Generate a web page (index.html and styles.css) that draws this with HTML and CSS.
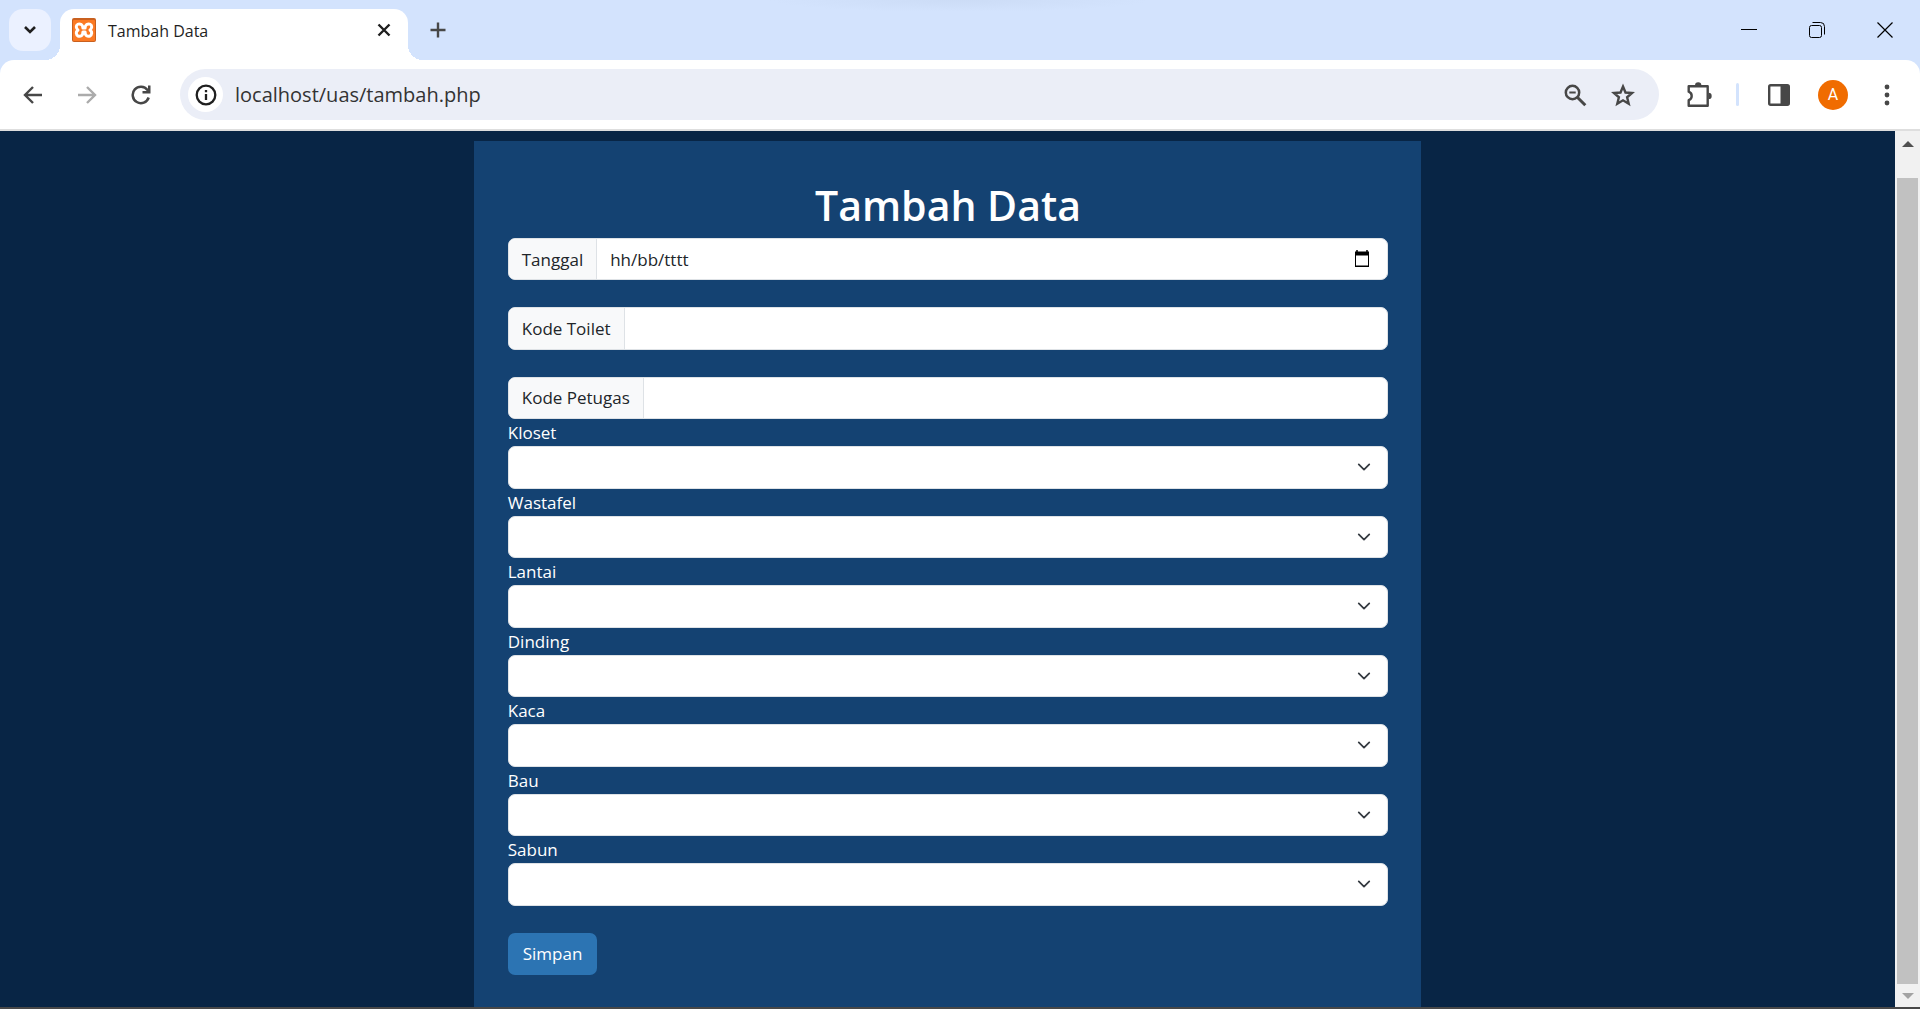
FILE: index.html
```html
<!DOCTYPE html>
<html lang="id">
<head>
<meta charset="utf-8">
<title>Tambah Data</title>
<link rel="stylesheet" href="styles.css">
</head>
<body>
<div class="window">
  <header class="tabstrip">
    <button class="tab-search" aria-label="Cari tab"><svg width="14" height="10" viewBox="0 0 14 10"><path d="M2 2l5 5 5-5" fill="none" stroke="#1f1f1f" stroke-width="2.6"/></svg></button>
    <div class="tab">
      <svg class="favicon" width="24" height="24" viewBox="0 0 24 24"><rect width="24" height="24" rx="2" fill="#c9601f"/><rect x="1" y="2" width="22" height="21" rx="1" fill="#fb7a24"/><path d="M9.300 6.600C6.800 5 4.100 6.400 4.300 9c.1 1.300.8 2.200 1.700 3-1 .8-1.800 1.800-1.700 3.200.2 2.700 2.900 4 5.400 2.400 1-.7 1.200-2 1.200-3.600h2.200c0 1.600.2 2.900 1.200 3.600 2.500 1.600 5.200.3 5.400-2.400.1-1.400-.7-2.400-1.700-3.200.9-.8 1.600-1.700 1.700-3 .2-2.600-2.500-4-5-2.400-1.100.7-1.600 1.700-1.600 3.400h-2.200C10.900 8.300 10.400 7.300 9.300 6.600z" fill="none" stroke="#fff" stroke-width="3" stroke-linejoin="round"/></svg>
      <span class="tab-title">Tambah Data</span>
      <button class="icon-button" aria-label="Tutup tab"><svg width="14" height="14" viewBox="0 0 14 14"><path d="M1.500 1.500l11 11M12.500 1.500l-11 11" stroke="#1f1f1f" stroke-width="2.400"/></svg></button>
    </div>
    <button class="icon-button new-tab" aria-label="Tab baru"><svg width="16" height="16" viewBox="0 0 16 16"><path d="M8 .5v15M.5 8h15" stroke="#474747" stroke-width="2.400"/></svg></button>
    <div class="window-controls">
      <button class="icon-button" aria-label="Kecilkan"><svg width="16" height="16" viewBox="0 0 16 16"><path d="M0 7.500h16" stroke="#000"/></svg></button>
      <button class="icon-button" aria-label="Pulihkan"><svg width="16" height="16" viewBox="0 0 16 16" fill="none" stroke="#000"><rect x=".5" y="3.500" width="12" height="12" rx="2"/><path d="M3.500.5h8a4 4 0 0 1 4 4v8"/></svg></button>
      <button class="icon-button" aria-label="Tutup"><svg width="16" height="16" viewBox="0 0 16 16"><path d="M.5.5l15 15M15.500.5l-15 15" stroke="#000" stroke-width="1.200"/></svg></button>
    </div>
  </header>

  <nav class="toolbar">
    <div class="nav-buttons">
      <button class="icon-button" aria-label="Kembali"><svg width="20" height="20" viewBox="0 0 20 20"><path d="M19 10H3M10 2l-8 8 8 8" fill="none" stroke="#474747" stroke-width="2.400"/></svg></button>
      <button class="icon-button" aria-label="Maju"><svg width="20" height="20" viewBox="0 0 20 20"><path d="M1 10h16M10 2l8 8-8 8" fill="none" stroke="#ababab" stroke-width="2.400"/></svg></button>
      <button class="icon-button" aria-label="Muat ulang"><svg width="20" height="20" viewBox="0 0 20 20"><path d="M17.700 12.500A8.200 8.200 0 1 1 16.500 5L18 7" fill="none" stroke="#474747" stroke-width="2.500"/><path d="M19.500.5v8h-8V6H17V.5z" fill="#474747"/></svg></button>
    </div>
    <div class="omnibox">
      <button class="site-info" aria-label="Informasi situs"><svg width="22" height="22" viewBox="0 0 22 22"><circle cx="11" cy="11" r="9.300" fill="none" stroke="#1f1f1f" stroke-width="2.300"/><path d="M11 10v6M11 6v2.300" stroke="#1f1f1f" stroke-width="2.300"/></svg></button>
      <input class="address" type="text" aria-label="Alamat" value="localhost/uas/tambah.php">
      <button class="icon-button" aria-label="Zoom"><svg width="24" height="24" viewBox="0 0 24 24" fill="none" stroke="#474747"><circle cx="9.500" cy="9.500" r="6.700" stroke-width="2.500"/><path d="M14.300 14.300l8 8" stroke-width="3"/><path d="M6.300 9.500h6.400" stroke-width="2"/></svg></button>
      <button class="icon-button" aria-label="Tandai halaman"><svg width="24" height="24" viewBox="0 0 24 24"><path d="M12 3.500l2.500 6 6.600.5-5 4.300 1.600 6.500L12 17.300l-5.700 3.500 1.600-6.500-5-4.300 6.600-.5z" fill="none" stroke="#474747" stroke-width="2.400"/></svg></button>
    </div>
    <div class="toolbar-actions">
      <button class="icon-button" aria-label="Ekstensi"><svg width="26" height="26" viewBox="0 0 26 26"><path d="M2.700 4.200h19v19.500h-19v-5.500c4-1.600 4-6.900 0-8.500z" fill="none" stroke="#474747" stroke-width="2.400" stroke-linejoin="round"/><path d="M9 3.500a3.200 3.200 0 0 1 6.400 0zM22.500 10.700a3.200 3.200 0 0 1 0 6.400z" fill="#474747"/></svg></button>
      <span class="divider"></span>
      <button class="icon-button" aria-label="Panel samping"><svg width="22" height="22" viewBox="0 0 22 22"><rect x="1.200" y="1.200" width="19.600" height="19.600" rx="1.500" fill="none" stroke="#474747" stroke-width="2.400"/><path d="M12.500 1H21v20h-8.500z" fill="#474747"/></svg></button>
      <button class="avatar" aria-label="Profil">A</button>
      <button class="icon-button" aria-label="Menu"><svg width="6" height="22" viewBox="0 0 6 22" fill="#474747"><circle cx="3" cy="3" r="2.400"/><circle cx="3" cy="11" r="2.400"/><circle cx="3" cy="19" r="2.400"/></svg></button>
    </div>
  </nav>

  <div class="viewport">
    <main class="page">
      <form class="panel">
        <h1 class="title">Tambah Data</h1>
        <div class="fields">
          <div class="input-group">
            <label class="addon" for="tanggal">Tanggal</label>
            <input class="control" id="tanggal" type="text" placeholder="hh/bb/tttt">
            <button class="calendar" type="button" aria-label="Pilih tanggal"><svg width="16" height="18" viewBox="0 0 16 18"><path d="M1 1.500h14V17H1z" fill="#000"/><path d="M3 0v2M13 0v2" stroke="#000" stroke-width="1.500"/><path d="M2 5.500h12V15.500H2z" fill="#fff"/></svg></button>
          </div>
          <div class="field spaced"><div class="input-group">
            <label class="addon" for="toilet">Kode Toilet</label>
            <input class="control" id="toilet" type="text">
          </div></div>
          <div class="field spaced"><div class="input-group">
            <label class="addon" for="petugas">Kode Petugas</label>
            <input class="control" id="petugas" type="text">
          </div></div>
          <div class="field"><label class="label" for="kloset">Kloset</label><select class="select" id="kloset"><option></option></select></div>
          <div class="field"><label class="label" for="wastafel">Wastafel</label><select class="select" id="wastafel"><option></option></select></div>
          <div class="field"><label class="label" for="lantai">Lantai</label><select class="select" id="lantai"><option></option></select></div>
          <div class="field"><label class="label" for="dinding">Dinding</label><select class="select" id="dinding"><option></option></select></div>
          <div class="field"><label class="label" for="kaca">Kaca</label><select class="select" id="kaca"><option></option></select></div>
          <div class="field"><label class="label" for="bau">Bau</label><select class="select" id="bau"><option></option></select></div>
          <div class="field"><label class="label" for="sabun">Sabun</label><select class="select" id="sabun"><option></option></select></div>
          <div class="field spaced"><button class="submit" type="submit">Simpan</button></div>
        </div>
      </form>
    </main>
    <div class="scrollbar">
      <svg width="12" height="6" viewBox="0 0 12 6"><path d="M6 0l6 6H0z" fill="#505050"/></svg>
      <div class="thumb"></div>
      <svg width="12" height="6" viewBox="0 0 12 6"><path d="M0 0h12L6 6z" fill="#a3a3a3"/></svg>
    </div>
  </div>
</div>
</body>
</html>
```
FILE: styles.css
```css
* { box-sizing: border-box; }

body {
  margin: 0;
  font-family: "Open Sans", "Noto Sans", sans-serif;
  font-size: 17px;
  line-height: 27px;
  color: #212529;
  background: #d3e3fd;
}

button, input, select { font: inherit; color: inherit; margin: 0; }

button { padding: 0; border: 0; background: none; }

svg { display: block; flex: none; }

.window {
  display: flex;
  flex-direction: column;
  min-height: 100vh;
  border-bottom: 2px solid #484848;
}

.icon-button {
  display: flex;
  align-items: center;
  justify-content: center;
}

/* Tab strip */
.tabstrip {
  display: flex;
  align-items: center;
  height: 60px;
  padding: 0 27px 0 9px;
  background: radial-gradient(ellipse 190px 12px at 50% 0, #ccdcf6, #d3e3fd);
}

.tab-search {
  display: flex;
  align-items: center;
  justify-content: center;
  width: 42px;
  height: 42px;
  border-radius: 14px;
  background: #ebf1ff;
}

.tab {
  position: relative;
  display: flex;
  align-items: center;
  align-self: flex-end;
  width: 348px;
  height: 51px;
  margin-left: 9px;
  padding: 0 17px 9px 12px;
  border-radius: 14px 14px 0 0;
  background: #fff;
}

.tab::before, .tab::after {
  content: "";
  position: absolute;
  bottom: 0;
  width: 15px;
  height: 15px;
}

.tab::before {
  right: 100%;
  background: radial-gradient(circle at 0 0, transparent 15px, #fff 15px);
}

.tab::after {
  left: 100%;
  background: radial-gradient(circle at 100% 0, transparent 15px, #fff 15px);
}

.tab-title {
  flex: 1;
  margin-left: 12px;
  padding-top: 3px;
  font-size: 16px;
  color: #1f1f1f;
}

.new-tab { margin-left: 22px; }

.window-controls {
  display: flex;
  gap: 52px;
  margin-left: auto;
}

/* Toolbar */
.toolbar {
  display: flex;
  align-items: center;
  height: 71px;
  padding: 0 30px 0 23px;
  border-bottom: 2px solid #dedede;
  border-radius: 14px 14px 0 0;
  background: #fff;
}

.nav-buttons {
  display: flex;
  gap: 34px;
}

.omnibox {
  display: flex;
  flex: 1;
  align-items: center;
  gap: 24px;
  height: 51px;
  margin-left: 29px;
  padding: 0 24px 0 8px;
  border-radius: 26px;
  background: #ebeef7;
}

.site-info {
  display: flex;
  align-items: center;
  justify-content: center;
  width: 35px;
  height: 35px;
  border-radius: 50%;
  background: #fff;
}

.address {
  flex: 1;
  min-width: 0;
  height: 40px;
  margin-left: -12px;
  padding: 0;
  border: 0;
  outline: 0;
  background: none;
  font-size: 20px;
  color: #333;
}

.toolbar-actions {
  display: flex;
  align-items: center;
  gap: 28px;
  margin-left: 27px;
}

.divider {
  width: 3px;
  height: 23px;
  margin: 0 1px 0 -4px;
  border-radius: 2px;
  background: #d3e3fd;
}

.avatar {
  width: 30px;
  height: 30px;
  border-radius: 50%;
  background: #f06c00;
  color: #fff;
  font-family: Roboto, sans-serif;
  font-size: 16px;
  line-height: 30px;
}

.toolbar-actions .icon-button:last-child { margin-left: 8px; }

/* Page */
.viewport {
  display: flex;
  flex: 1;
}

.page {
  display: flex;
  flex: 1;
  justify-content: center;
  padding-top: 10px;
  background: #082545;
}

.panel {
  display: flex;
  flex-direction: column;
  width: 50%;
  padding: 37px 33px 32px 34px;
  background: #144272;
}

.title {
  margin: 0 0 6px;
  font-size: 41px;
  font-weight: 600;
  line-height: 54px;
  text-align: center;
  color: #fff;
}

.fields {
  display: grid;
  flex: 1;
  grid-template-rows: 42px;
  grid-auto-rows: 1fr;
}

.field {
  display: flex;
  flex-direction: column;
  align-items: stretch;
}

.spaced { padding-top: 27px; }

.label {
  height: 27px;
  line-height: 27px;
  align-self: flex-start;
  color: #fff;
}

.input-group {
  display: flex;
  flex: 1;
  align-items: stretch;
  overflow: hidden;
  border: 1px solid #dee2e6;
  border-radius: 7px;
  background: #fff;
}

.addon {
  display: flex;
  align-items: center;
  padding: 0 13px;
  border-right: 1px solid #dee2e6;
  background: #f8f9fa;
}

.control {
  flex: 1;
  min-width: 0;
  padding: 0 13px;
  border: 0;
  outline: 0;
  background: none;
}

.control::placeholder { color: #212529; opacity: 1; }

.calendar { padding: 0 17px; }

.select {
  flex: 1;
  width: 100%;
  min-height: 40px;
  padding: 0 40px 0 13px;
  appearance: none;
  border: 1px solid #dee2e6;
  border-radius: 7px;
  background: #fff url("data:image/svg+xml,%3Csvg xmlns='http://www.w3.org/2000/svg' viewBox='0 0 16 16'%3E%3Cpath fill='none' stroke='%23343a40' stroke-linecap='round' stroke-linejoin='round' stroke-width='2' d='m2 5 6 6 6-6'/%3E%3C/svg%3E") no-repeat right 16px center / 14px 14px;
}

.submit {
  flex: 1;
  align-self: flex-start;
  padding: 0 15px;
  border-radius: 7px;
  background: #2c74b3;
  color: #fff;
}

/* Scrollbar */
.scrollbar {
  display: flex;
  flex-direction: column;
  align-items: center;
  width: 25px;
  padding: 10px 2px 8px;
  background: #f1f1f1;
}

.thumb {
  flex: 1;
  width: 21px;
  margin: 31px 0 9px;
  background: #c1c1c1;
}
```
